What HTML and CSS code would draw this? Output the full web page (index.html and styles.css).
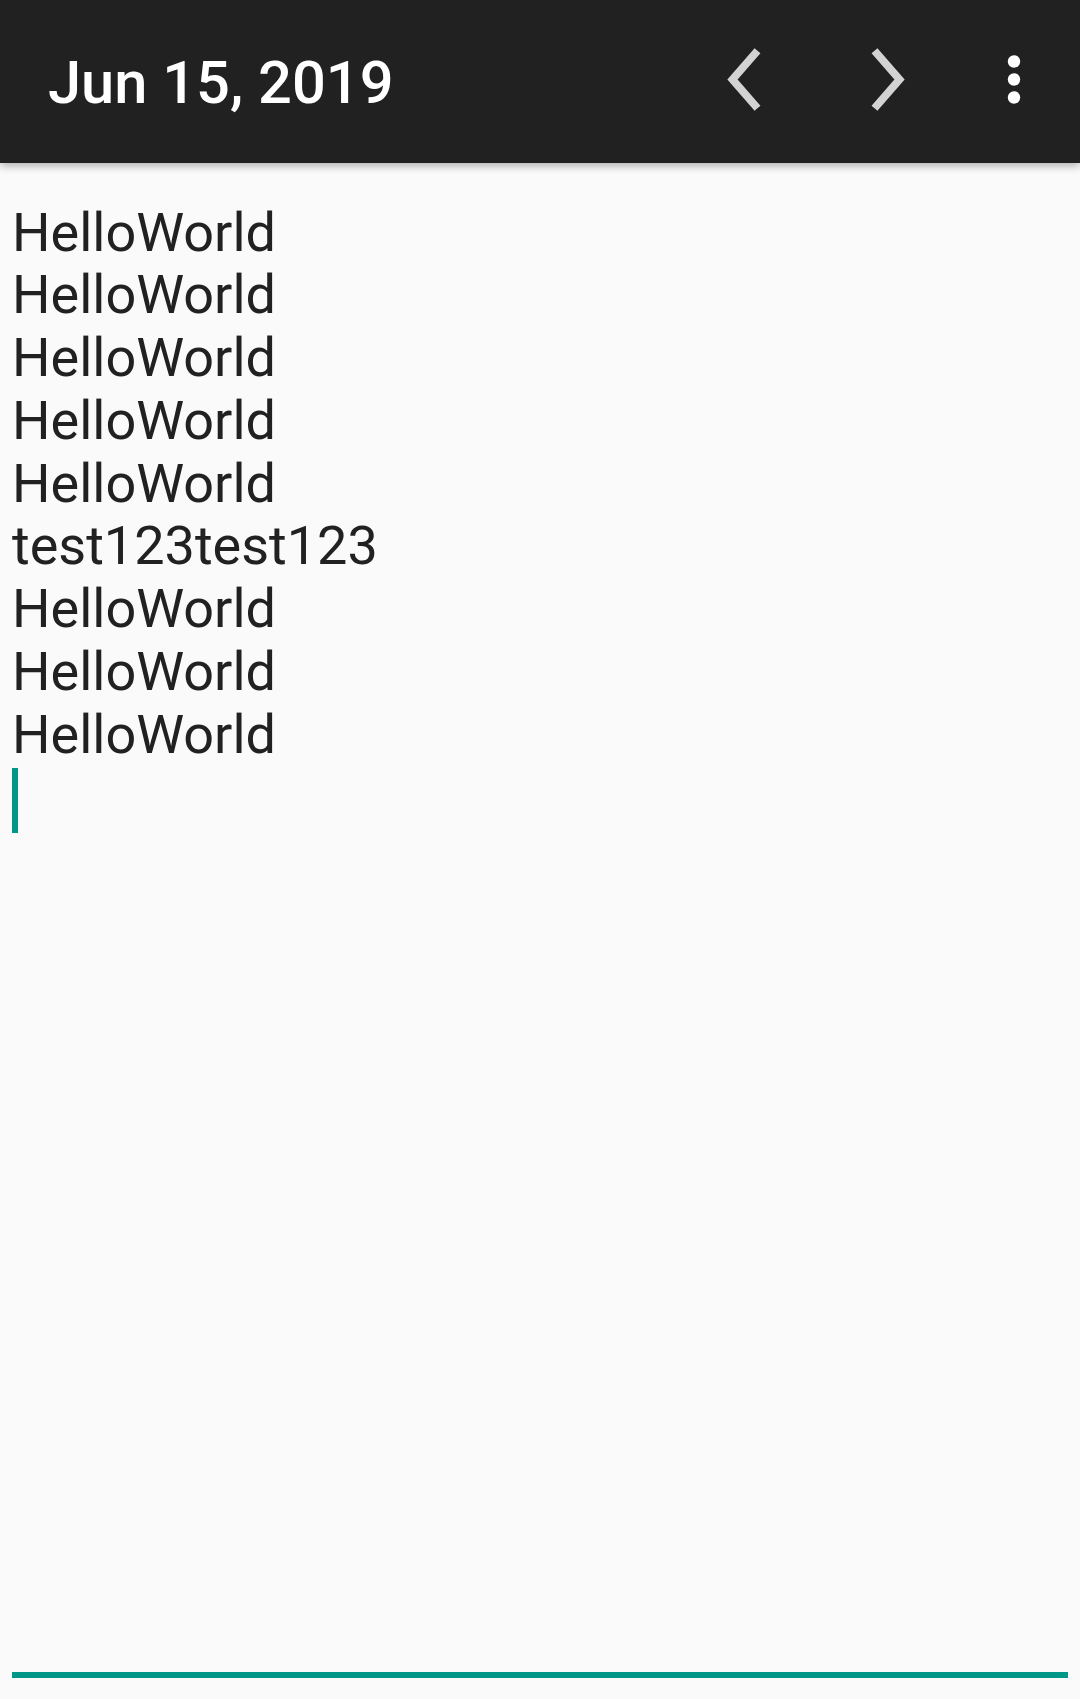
FILE: index.html
```html
<!DOCTYPE html>
<html>
<head>
<meta charset="utf-8">
<link rel="stylesheet" href="styles.css">
</head>
<body>
<div class="page">
  <header class="toolbar">
    <div class="title">Jun 15, 2019</div>
    <svg class="chev prev" width="40" height="70" viewBox="0 0 40 70"><polyline points="33.5,3.8 8.5,32.5 33.5,61.2" fill="none" stroke="#d3d3d3" stroke-width="7.8" stroke-linejoin="miter" stroke-miterlimit="10"/></svg>
    <svg class="chev next" width="40" height="70" viewBox="0 0 40 70"><polyline points="6.5,3.8 31.5,32.5 6.5,61.2" fill="none" stroke="#d3d3d3" stroke-width="7.8" stroke-linejoin="miter" stroke-miterlimit="10"/></svg>
    <svg class="more" width="24" height="70" viewBox="0 0 24 70"><circle cx="12" cy="14.5" r="6.2" fill="#fff"/><circle cx="12" cy="32.5" r="6.2" fill="#fff"/><circle cx="12" cy="50.5" r="6.2" fill="#fff"/></svg>
  </header>
  <main class="editor">
    <div class="line">HelloWorld</div>
    <div class="line">HelloWorld</div>
    <div class="line">HelloWorld</div>
    <div class="line">HelloWorld</div>
    <div class="line">HelloWorld</div>
    <div class="line">test123test123</div>
    <div class="line">HelloWorld</div>
    <div class="line">HelloWorld</div>
    <div class="line">HelloWorld</div>
    <div class="line"><span class="cursor"></span></div>
  </main>
  <div class="underline"></div>
</div>
</body>
</html>
```
FILE: styles.css
```css
html, body {
  margin: 0;
  padding: 0;
  background: #fafafa;
}
.page {
  height: 1699px;
  display: flex;
  flex-direction: column;
  font-family: Roboto, "Noto Sans", sans-serif;
}
.toolbar {
  height: 163px;
  flex: none;
  background: #212121;
  display: flex;
  align-items: center;
  padding: 0 54px 0 48px;
  box-shadow: 0 3px 8px rgba(0, 0, 0, 0.3);
  position: relative;
  z-index: 1;
}
.title {
  flex: 1;
  color: #fff;
  font-weight: 500;
  font-size: 59.6px;
  margin-top: 2px;
}
.chev { display: block; }
.prev { margin-right: 104px; }
.next { margin-right: 94px; }
.more { display: block; }
.editor {
  flex: 1;
  padding: 38.5px 12px 0;
  color: #212121;
  font-size: 54px;
}
.line {
  height: 62.8px;
  line-height: 62.8px;
  white-space: pre;
}
.cursor {
  display: inline-block;
  width: 6px;
  height: 65px;
  background: #009688;
  vertical-align: top;
  margin-top: 1px;
}
.underline {
  flex: none;
  height: 6px;
  margin: 0 12px 21px;
  background: #009688;
}
```
